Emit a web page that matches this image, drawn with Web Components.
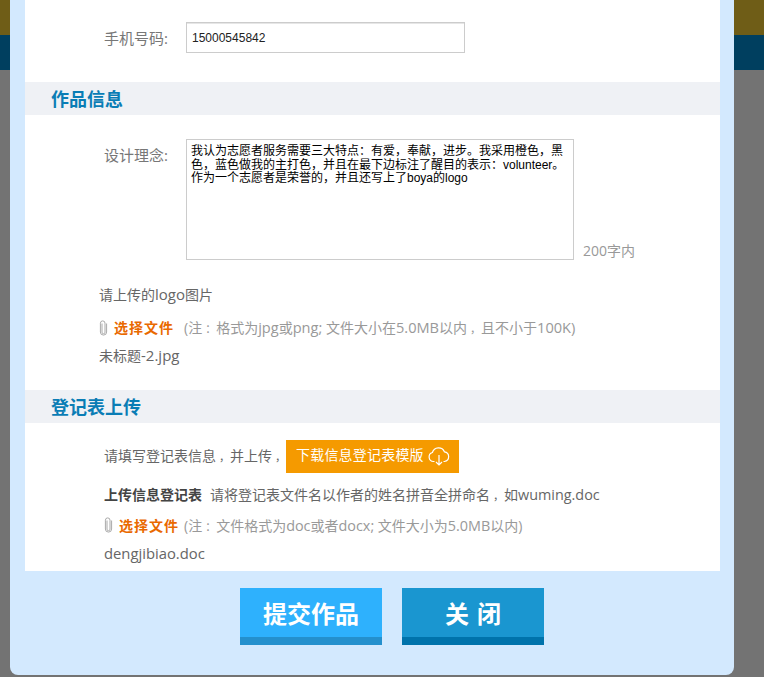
<!DOCTYPE html>
<html lang="zh"><head><meta charset="utf-8">
<style>
html,body{margin:0;padding:0;height:677px;overflow:hidden}
body{background:linear-gradient(#6f5d17 0 35px,#003f5f 35px 70px,#737373 70px);font:14px "Open Sans","Noto Sans CJK SC",sans-serif;color:#666}
.la{font-size:14.6px}
.p{padding-left:3px;font-size:11px}
</style></head><body>
<x-dialog>
  <x-field label="手机号码:" style="padding-top:22px;height:60px">
    <x-input>15000545842</x-input>
  </x-field>
  <x-section>作品信息</x-section>
  <x-field label="设计理念:" style="padding-top:24px;height:136px">
    <x-textarea>我认为志愿者服务需要三大特点：有爱，奉献，进步。我采用橙色，黑色，蓝色做我的主打色，并且在最下边标注了醒目的表示：volunteer。作为一个志愿者是荣誉的，并且还写上了boya的logo</x-textarea>
    <x-hint>200字内</x-hint>
  </x-field>
  <x-upload style="padding-left:74px;height:115px" intro="请上传的<span class=la>logo</span>图片" file="未标题<span class=la>-2.jpg</span>">(注<span class="p">：</span>格式为<span class="la">jpg</span>或<span class="la">png;</span> 文件大小在<span class="la">5.0MB</span>以内<span class="p">，</span>且不小于<span class="la">100K)</span></x-upload>
  <x-section>登记表上传</x-section>
  <x-register></x-register>
  <x-actions slot="actions">
    <x-btn>提交作品</x-btn>
    <x-btn variant="dark">关 闭</x-btn>
  </x-actions>
</x-dialog>
<script>
const FONT='"Open Sans","Noto Sans CJK SC",sans-serif';
const clip=`<svg width="9" height="16" viewBox="0 0 9 16" fill="none" stroke="#a9a9a9" stroke-width="1"><path d="M3 3.5V12.2a1.5 1.5 0 0 0 3 0V3.2a2.2 2.2 0 0 0-4.6 0V12a3.1 3.1 0 0 0 6.2 0V3.5"/></svg>`;
function def(name,html,init){
  customElements.define(name,class extends HTMLElement{
    constructor(){super();this.attachShadow({mode:'open'}).innerHTML=html}
    connectedCallback(){init&&init(this,this.shadowRoot)}
  });
}
def('x-dialog',`<style>
:host{display:flex;flex-direction:column;box-sizing:border-box;width:724px;height:675px;margin-left:10px;padding:0 14px 0 15px;background:#d3e9fe;border-radius:0 0 8px 8px}
.white{display:block;background:#fff;height:571px;overflow:hidden}
</style><div class="white"><slot></slot></div><slot name="actions"></slot>`);
def('x-section',`<style>
:host{display:block;box-sizing:border-box;height:33px;background:#eff1f5;padding-left:26px;font:bold 18px/34px ${FONT};color:#0a7db5}
</style><slot></slot>`);
def('x-field',`<style>
:host{display:flex;align-items:flex-start}
.l{width:161px;padding-right:18px;box-sizing:border-box;text-align:right;font-size:15px;line-height:32px;color:#777;flex:none}
.c{display:flex;align-items:flex-end}
</style><div class="l"></div><div class="c"><slot></slot></div>`,(h,s)=>{s.querySelector('.l').textContent=h.getAttribute('label')});
def('x-input',`<style>
:host{display:block;box-sizing:border-box;width:279px;height:31px;border:1px solid #ccc;padding:1px 0 0 5px;font:12px/28px "Liberation Sans",sans-serif;color:#222;box-shadow:inset 0 1px 0 #e6e6e6}
</style><slot></slot>`);
def('x-textarea',`<style>
:host{display:block;box-sizing:border-box;width:388px;height:121px;border:1px solid #ccc;padding:5px 4px 0 4px;font:12px/13.5px "Liberation Sans","Noto Sans CJK SC",sans-serif;color:#000;overflow:hidden}
</style><slot></slot>`);
def('x-hint',`<style>
:host{display:block;margin:0 0 -1px 9px;font-size:14px;line-height:20px;color:#999}
</style><slot></slot>`);
def('x-upload',`<style>
:host{display:flex;flex-direction:column;box-sizing:border-box}
.i,.f{color:#666;line-height:20px;height:20px}
.i{margin-top:9px}
.r{display:flex;align-items:center;height:20px;margin-top:13px}
.r svg{margin-right:6px;margin-top:1px}
b{color:#e96900;font-weight:bold;letter-spacing:1px;margin-right:10px;white-space:nowrap}
.n{color:#999;white-space:nowrap}
.f{margin-top:8px}
.la{font-size:15px}
</style><div class="i"></div><div class="r">${clip}<b>选择文件</b><span class="n"><slot></slot></span></div><div class="f"></div>`,(h,s)=>{
  s.querySelector('.i').innerHTML=h.getAttribute('intro');
  s.querySelector('.f').innerHTML=h.getAttribute('file');
});
def('x-register',`<style>
:host{display:flex;flex-direction:column;padding:17px 0 0 79px;color:#666}
.a{display:flex;align-items:center;height:33px}
.t{flex:none;width:182px;white-space:nowrap;margin-top:-4px}
.d{display:flex;align-items:center;flex:none;box-sizing:border-box;width:173px;height:33px;padding:0 0 5px 10px;background:#f59a00;color:#fff;white-space:nowrap;letter-spacing:.2px}
.d svg{margin-left:4px;margin-top:5px;flex:none}
.b{margin-top:12px;height:20px;line-height:20px;white-space:nowrap}
.b strong{color:#444;margin-right:8px}
.r{display:flex;align-items:center;height:20px;margin-top:10px;white-space:nowrap}
.r svg{margin-right:6px}
.r b{color:#e96900;letter-spacing:1px;margin-right:5px}
.r span{color:#999}
.f{height:20px;line-height:20px;margin-top:8px;font-size:14.8px}
.la{font-size:14.4px}
.p{padding-left:3px;font-size:11px}
</style>
<div class="a"><span class="t">请填写登记表信息<span class="p">，</span>并上传<span class="p">，</span></span><span class="d">下载信息登记表模版<svg width="22" height="20" viewBox="0 0 22 20" fill="none" stroke="#fff" stroke-width="1.2"><path d="M6.5 14.5H5.5A4.6 4.6 0 0 1 4.4 5.5 6.4 6.4 0 0 1 16.4 4.8 4.9 4.9 0 0 1 16.5 14.5H15.5"/><path d="M11 8V18M8 15l3 3 3-3"/></svg></span></div>
<div class="b"><strong>上传信息登记表</strong>请将登记表文件名以作者的姓名拼音全拼命名<span class="p">，</span>如<span class="la">wuming.doc</span></div>
<div class="r">${clip}<b>选择文件</b><span>(注<span class="p">：</span>文件格式为<span class="la">doc</span>或者<span class="la">docx;</span> 文件大小为<span class="la">5.0MB</span>以内)</span></div>
<div class="f">dengjibiao.doc</div>`);
def('x-actions',`<style>
:host{display:flex;justify-content:flex-start;gap:20px;padding:17px 0 0 215px}
</style><slot></slot>`);
def('x-btn',`<style>
:host{display:block;box-sizing:border-box;width:142px;height:57px;background:#2eb1fd;border-bottom:8px solid #2490cd;color:#fff;text-align:center;font:bold 24px/51px ${FONT};word-spacing:2px}
:host([variant=dark]){background:#1a96d0;border-bottom-color:#0073ab}
</style><slot></slot>`);
</script>
</body></html>
